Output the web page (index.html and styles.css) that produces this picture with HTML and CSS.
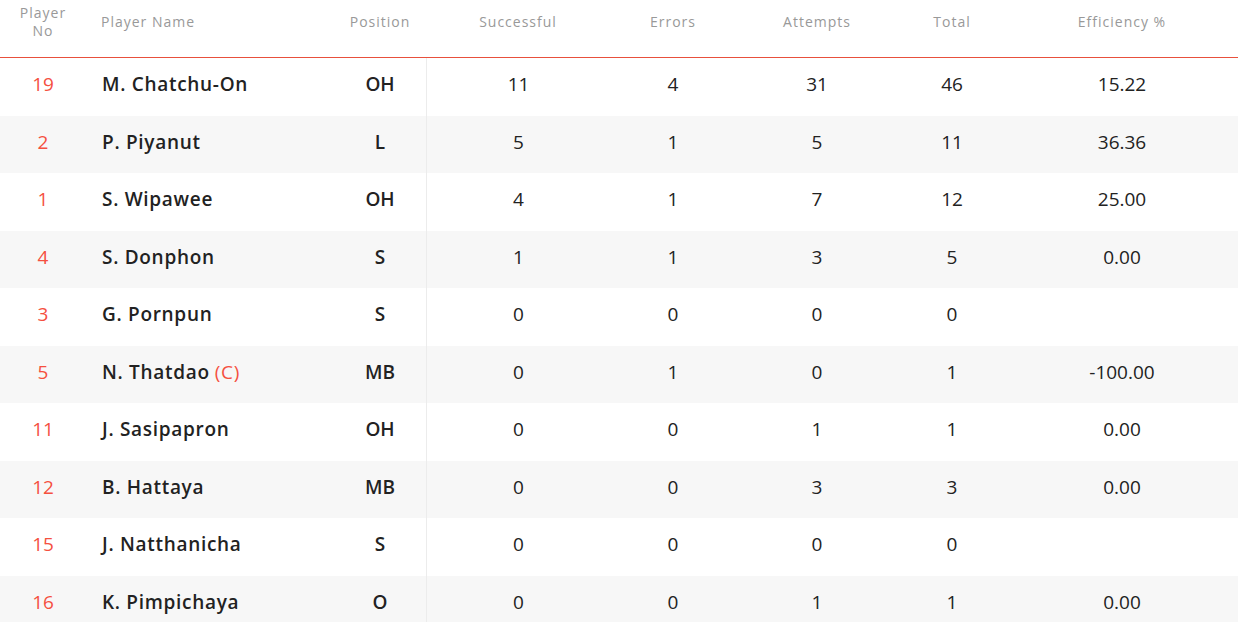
FILE: index.html
```html
<!DOCTYPE html>
<html lang="en">
<head>
<meta charset="utf-8">
<title>Player Stats</title>
<link rel="stylesheet" href="styles.css">
</head>
<body>
<div class="stats">
  <div class="row head">
    <div class="cell c">Player<br>No</div>
    <div class="cell l">Player Name</div>
    <div class="cell c">Position</div>
    <div class="cell c">Successful</div>
    <div class="cell c">Errors</div>
    <div class="cell c">Attempts</div>
    <div class="cell c">Total</div>
    <div class="cell c">Efficiency %</div>
  </div>
  <div class="row">
    <div class="cell c no">19</div><div class="cell l name">M. Chatchu-On</div><div class="cell c pos">OH</div>
    <div class="cell c div">11</div><div class="cell c">4</div><div class="cell c">31</div><div class="cell c">46</div><div class="cell c">15.22</div>
  </div>
  <div class="row alt">
    <div class="cell c no">2</div><div class="cell l name">P. Piyanut</div><div class="cell c pos">L</div>
    <div class="cell c div">5</div><div class="cell c">1</div><div class="cell c">5</div><div class="cell c">11</div><div class="cell c">36.36</div>
  </div>
  <div class="row">
    <div class="cell c no">1</div><div class="cell l name">S. Wipawee</div><div class="cell c pos">OH</div>
    <div class="cell c div">4</div><div class="cell c">1</div><div class="cell c">7</div><div class="cell c">12</div><div class="cell c">25.00</div>
  </div>
  <div class="row alt">
    <div class="cell c no">4</div><div class="cell l name">S. Donphon</div><div class="cell c pos">S</div>
    <div class="cell c div">1</div><div class="cell c">1</div><div class="cell c">3</div><div class="cell c">5</div><div class="cell c">0.00</div>
  </div>
  <div class="row">
    <div class="cell c no">3</div><div class="cell l name">G. Pornpun</div><div class="cell c pos">S</div>
    <div class="cell c div">0</div><div class="cell c">0</div><div class="cell c">0</div><div class="cell c">0</div><div class="cell c"></div>
  </div>
  <div class="row alt">
    <div class="cell c no">5</div><div class="cell l name">N. Thatdao <span class="cap">(C)</span></div><div class="cell c pos">MB</div>
    <div class="cell c div">0</div><div class="cell c">1</div><div class="cell c">0</div><div class="cell c">1</div><div class="cell c">-100.00</div>
  </div>
  <div class="row">
    <div class="cell c no">11</div><div class="cell l name">J. Sasipapron</div><div class="cell c pos">OH</div>
    <div class="cell c div">0</div><div class="cell c">0</div><div class="cell c">1</div><div class="cell c">1</div><div class="cell c">0.00</div>
  </div>
  <div class="row alt">
    <div class="cell c no">12</div><div class="cell l name">B. Hattaya</div><div class="cell c pos">MB</div>
    <div class="cell c div">0</div><div class="cell c">0</div><div class="cell c">3</div><div class="cell c">3</div><div class="cell c">0.00</div>
  </div>
  <div class="row">
    <div class="cell c no">15</div><div class="cell l name">J. Natthanicha</div><div class="cell c pos">S</div>
    <div class="cell c div">0</div><div class="cell c">0</div><div class="cell c">0</div><div class="cell c">0</div><div class="cell c"></div>
  </div>
  <div class="row alt">
    <div class="cell c no">16</div><div class="cell l name">K. Pimpichaya</div><div class="cell c pos">O</div>
    <div class="cell c div">0</div><div class="cell c">0</div><div class="cell c">1</div><div class="cell c">1</div><div class="cell c">0.00</div>
  </div>
</div>
</body>
</html>
```
FILE: styles.css
```css
html, body {
  margin: 0;
  padding: 0;
  background: #fff;
}
body {
  font-family: "Open Sans", "Noto Sans", sans-serif;
  color: #222;
  overflow: hidden;
}
.stats {
  width: 1238px;
}
.row {
  display: grid;
  grid-template-columns: 86px 248px 92px 184px 126px 162px 108px 232px;
  height: 57.5px;
  font-size: 19px;
}
.row.alt {
  background: #f7f7f7;
}
.row.head {
  height: 57px;
  border-bottom: 1px solid #e8503c;
  font-size: 14px;
  color: #999;
  letter-spacing: 1px;
  line-height: 18px;
}
.row.head .cell {
  align-items: center;
  padding-bottom: 13px;
}
.cell {
  display: flex;
  align-items: center;
  padding-bottom: 5px;
  box-sizing: border-box;
}
.cell.c {
  justify-content: center;
  text-align: center;
}
.cell.l {
  padding-left: 16px;
}
.row.head .cell.l {
  padding-left: 15px;
}
.cell.div {
  border-left: 1px solid #ececec;
}
.no {
  color: #f5503f;
}
.name, .pos {
  font-weight: 600;
}
.name {
  letter-spacing: 0.7px;
}
.cap {
  color: #f5503f;
  font-weight: 500;
  margin-left: 5px;
}
```
